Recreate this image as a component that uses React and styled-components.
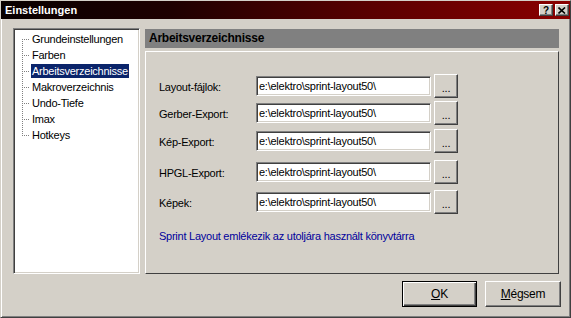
import React from 'react';
import styled, { createGlobalStyle } from 'styled-components';

const GlobalStyle = createGlobalStyle`
  html, body {
    margin: 0;
    padding: 0;
    background: #d4d0c8;
  }
  body {
    font-family: "Liberation Sans", Arial, sans-serif;
    font-size: 11px;
    letter-spacing: -0.25px;
    color: #000;
  }
`;

const Window = styled.div`
  width: 571px;
  height: 318px;
  box-sizing: border-box;
  display: flex;
  flex-direction: column;
  background: #d4d0c8;
  border: 1px solid;
  border-color: #d4d0c8 #404040 #404040 #d4d0c8;
  box-shadow: inset 1px 1px #fff, inset -1px -1px #808080;
`;

const TitleBar = styled.div`
  height: 18px;
  display: flex;
  align-items: center;
  justify-content: space-between;
  padding: 0 1px 0 4px;
  background: linear-gradient(to right, #080000, #1e0000 30%, #5a0000 65%, #8a0000);
  color: #fff;
  font-weight: bold;
  font-size: 11px;
  letter-spacing: 0;
`;

const TitleButtons = styled.div`
  display: flex;
  gap: 2px;
`;

const CaptionButton = styled.div`
  width: 14px;
  height: 12px;
  box-sizing: border-box;
  display: flex;
  align-items: center;
  justify-content: center;
  background: #d4d0c8;
  color: #000;
  font-size: 10px;
  font-weight: bold;
  border: 1px solid;
  border-color: #fff #404040 #404040 #fff;
  box-shadow: inset -1px -1px #808080;
`;

const Body = styled.div`
  flex: 1;
  display: flex;
  flex-direction: column;
  padding: 9px 11px 0 12px;
`;

const Main = styled.div`
  display: flex;
  gap: 5px;
  height: 246px;
`;

const Tree = styled.div`
  width: 127px;
  height: 246px;
  box-sizing: border-box;
  background: #fff;
  border: 1px solid;
  border-color: #808080 #fff #fff #808080;
  box-shadow: inset 1px 1px #404040, inset -1px -1px #d4d0c8;
  padding: 2px 0 0 8px;
`;

const TreeItem = styled.div`
  display: flex;
  align-items: center;
  height: 16px;
`;

const Connector = styled.span`
  position: relative;
  width: 8px;
  height: 16px;
  flex: none;
  background: linear-gradient(to right, #808080 50%, transparent 50%) 0 8px / 2px 1px repeat-x;

  &::before {
    content: '';
    position: absolute;
    left: 0;
    width: 1px;
    top: ${p => (p.$first ? '8px' : '0')};
    bottom: ${p => (p.$last ? '7px' : '0')};
    background: linear-gradient(to bottom, #808080 50%, transparent 50%) 0 0 / 1px 2px repeat-y;
  }
`;

const ItemLabel = styled.span`
  margin-left: 1px;
  padding: 0 1px;
  height: 14px;
  line-height: 14px;
  white-space: nowrap;
  background: ${p => (p.$selected ? '#0a246a' : 'transparent')};
  color: ${p => (p.$selected ? '#fff' : '#000')};
`;

const RightColumn = styled.div`
  width: 414px;
  display: flex;
  flex-direction: column;
  gap: 3px;
  margin-top: 1px;
`;

const Header = styled.div`
  height: 19px;
  line-height: 19px;
  padding-left: 4px;
  background: #808080;
  font-weight: bold;
  font-size: 12px;
`;

const Panel = styled.div`
  flex: 1;
  box-sizing: border-box;
  border: 1px solid;
  border-color: #fff #404040 #404040 #fff;
  padding: 22px 0 0 13px;
  display: flex;
  flex-direction: column;
`;

const Row = styled.div`
  display: flex;
  align-items: center;
  height: 24px;
  margin-top: ${p => p.$gap || 0}px;
`;

const Label = styled.span`
  width: 97px;
  padding-top: 1px;
`;

const TextField = styled.div`
  width: 175px;
  height: 20px;
  box-sizing: border-box;
  background: #fff;
  border: 1px solid;
  border-color: #808080 #fff #fff #808080;
  box-shadow: inset 1px 1px #404040, inset -1px -1px #d4d0c8;
  padding: 0 2px;
  line-height: 18px;
  white-space: nowrap;
  overflow: hidden;
`;

const BrowseButton = styled.div`
  width: 24px;
  height: 24px;
  margin-left: 3px;
  box-sizing: border-box;
  display: flex;
  align-items: center;
  justify-content: center;
  padding-top: 3px;
  border: 1px solid;
  border-color: #fff #404040 #404040 #fff;
  box-shadow: inset -1px -1px #808080;
`;

const Note = styled.div`
  margin-top: 16px;
  color: #00009c;
`;

const Footer = styled.div`
  display: flex;
  justify-content: flex-end;
  gap: 8px;
  margin: 7px -2px 0 0;
`;

const Button = styled.div`
  width: ${p => p.$width}px;
  height: 26px;
  box-sizing: border-box;
  display: flex;
  align-items: center;
  justify-content: center;
  border: 1px solid;
  border-color: ${p => (p.$default ? '#000' : '#fff #404040 #404040 #fff')};
  box-shadow: ${p =>
    p.$default
      ? 'inset 1px 1px #fff, inset -1px -1px #404040, inset -2px -2px #808080'
      : 'inset -1px -1px #808080'};
  font-size: 12px;

  u {
    text-decoration: underline;
  }
`;

const items = [
  'Grundeinstellungen',
  'Farben',
  'Arbeitsverzeichnisse',
  'Makroverzeichnis',
  'Undo-Tiefe',
  'Imax',
  'Hotkeys',
];

const rows = [
  { label: 'Layout-fájlok:', gap: 0 },
  { label: 'Gerber-Export:', gap: 3 },
  { label: 'Kép-Export:', gap: 4 },
  { label: 'HPGL-Export:', gap: 7 },
  { label: 'Képek:', gap: 6 },
];

const App = () => (
  <>
    <GlobalStyle />
    <Window>
      <TitleBar>
        <span>Einstellungen</span>
        <TitleButtons>
          <CaptionButton>?</CaptionButton>
          <CaptionButton>
            <svg width="8" height="7" viewBox="0 0 8 7">
              <path d="M0.5 0.5 L7 6.5 M7 0.5 L0.5 6.5" stroke="#000" strokeWidth="1.6" />
            </svg>
          </CaptionButton>
        </TitleButtons>
      </TitleBar>
      <Body>
        <Main>
          <Tree>
            {items.map((name, i) => (
              <TreeItem key={name}>
                <Connector $first={i === 0} $last={i === items.length - 1} />
                <ItemLabel $selected={name === 'Arbeitsverzeichnisse'}>{name}</ItemLabel>
              </TreeItem>
            ))}
          </Tree>
          <RightColumn>
            <Header>Arbeitsverzeichnisse</Header>
            <Panel>
              {rows.map(r => (
                <Row key={r.label} $gap={r.gap}>
                  <Label>{r.label}</Label>
                  <TextField>e:\elektro\sprint-layout50\</TextField>
                  <BrowseButton>...</BrowseButton>
                </Row>
              ))}
              <Note>Sprint Layout emlékezik az utoljára használt könyvtárra</Note>
            </Panel>
          </RightColumn>
        </Main>
        <Footer>
          <Button $default $width={75}>
            <span><u>O</u>K</span>
          </Button>
          <Button $width={76}>
            <span><u>M</u>égsem</span>
          </Button>
        </Footer>
      </Body>
    </Window>
  </>
);

export default App;
